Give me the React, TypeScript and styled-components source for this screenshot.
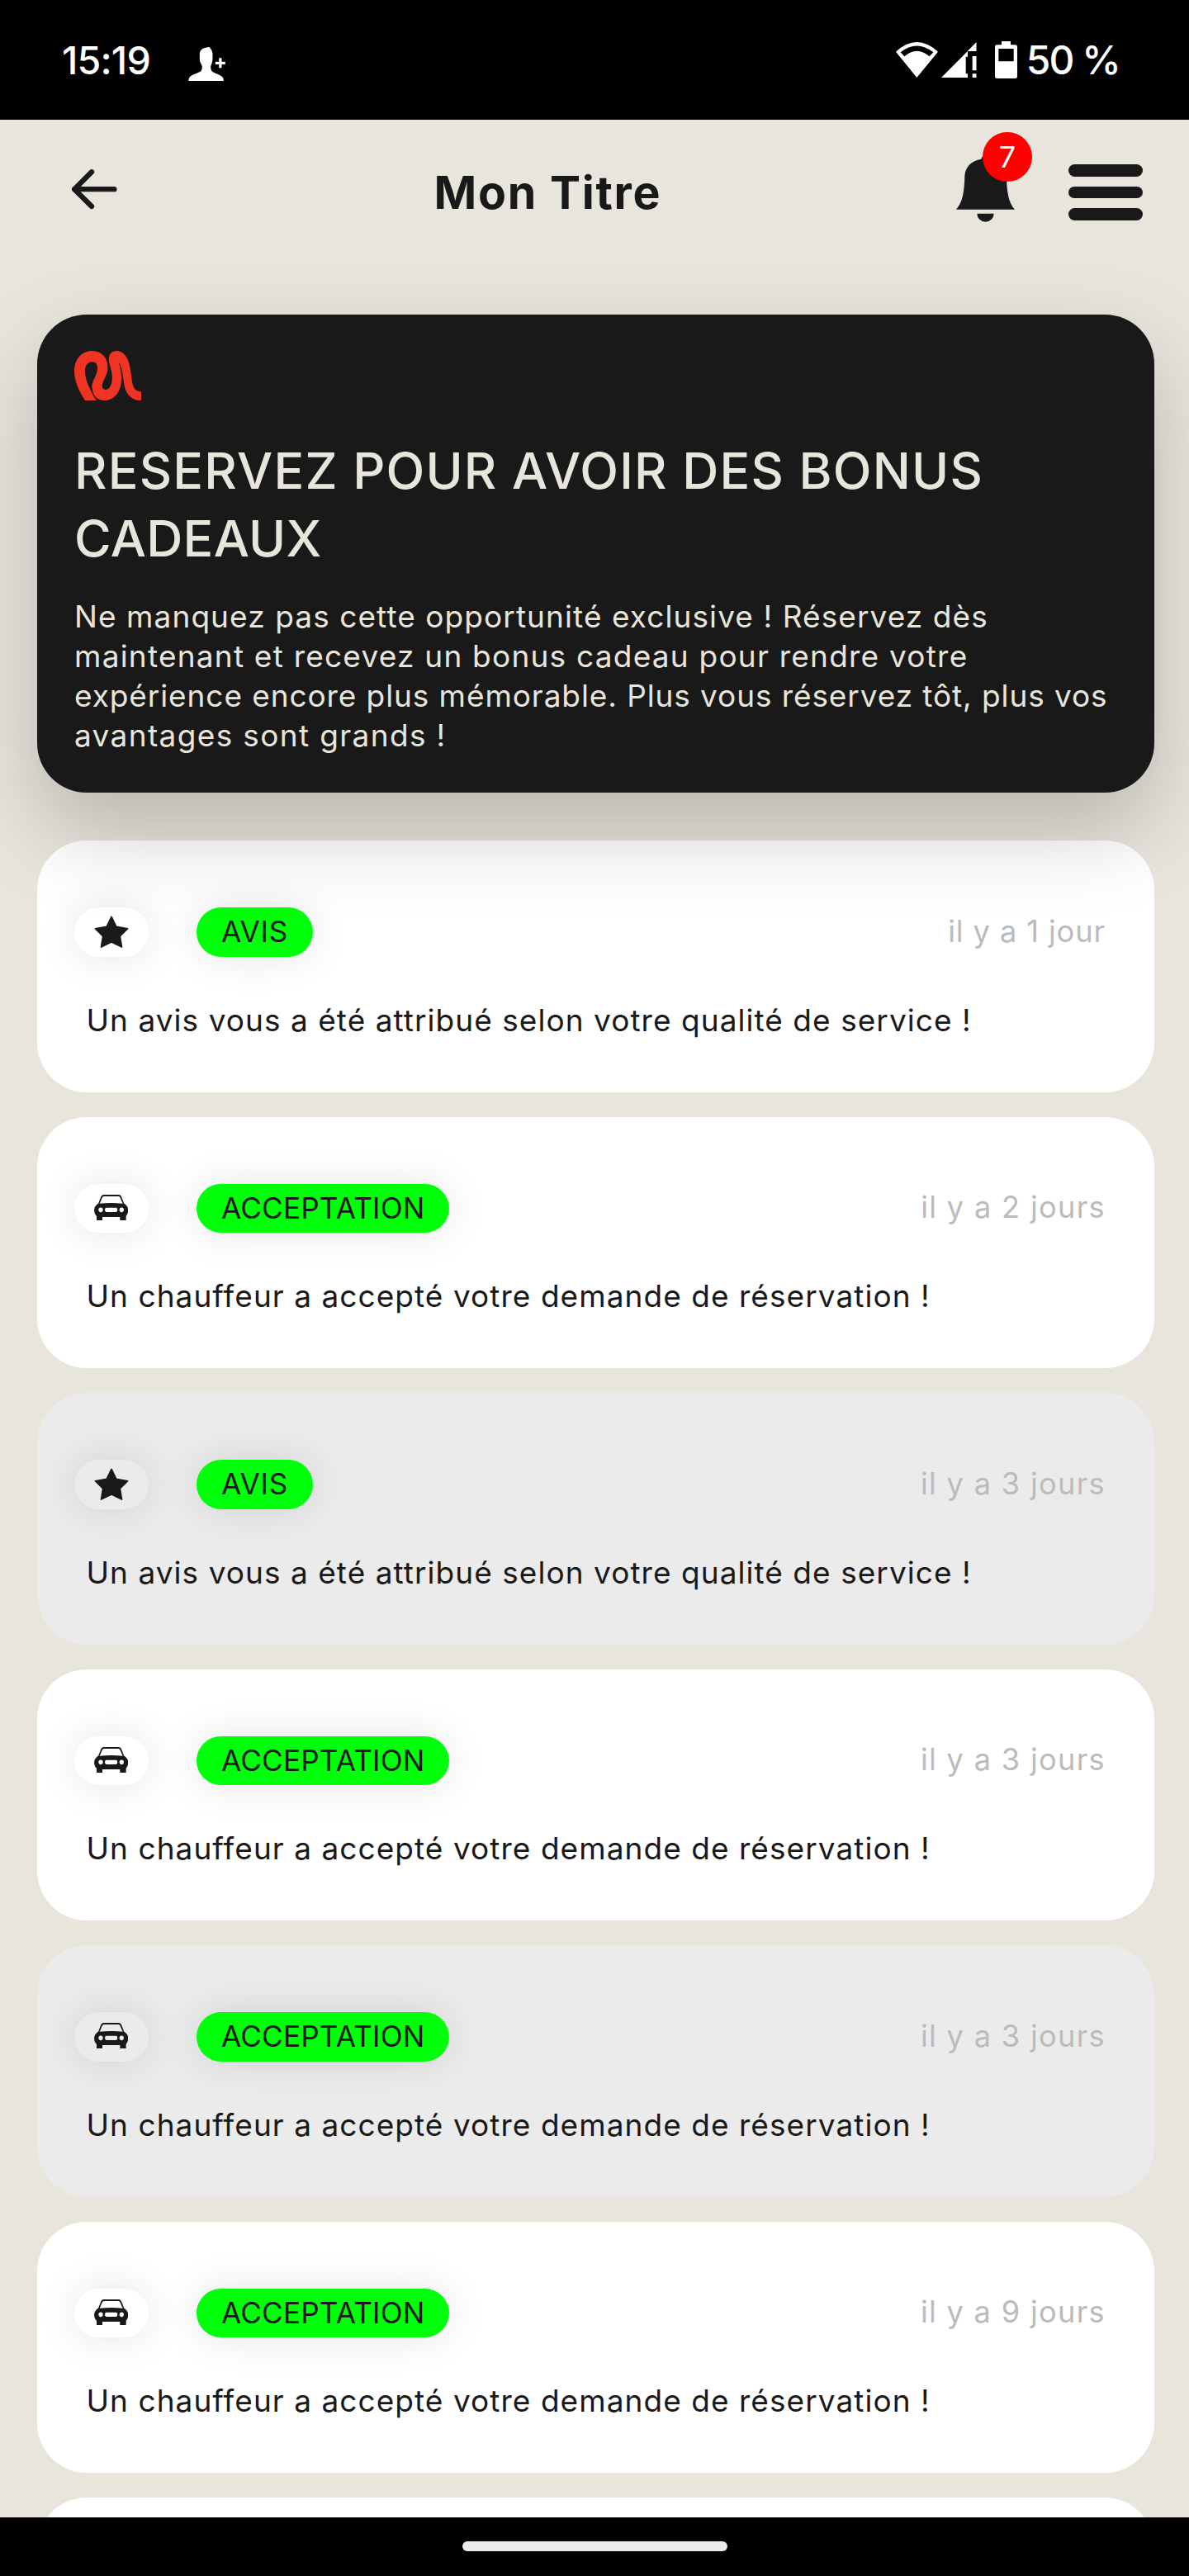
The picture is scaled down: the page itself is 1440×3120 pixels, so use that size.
import React from "react";
import styled, { createGlobalStyle } from "styled-components";

const ink = "#191919";
const cream = "#e8e5dd";

const GlobalStyle = createGlobalStyle`
  *, *::before, *::after { box-sizing: border-box; }
  body { margin: 0; background: ${cream}; }
`;

const Screen = styled.div`
  width: 1440px;
  height: 3120px;
  display: flex;
  flex-direction: column;
  overflow: hidden;
  background: ${cream};
  color: ${ink};
  font-family: Inter, "Liberation Sans", sans-serif;
`;

const StatusBar = styled.div`
  flex: none;
  height: 145px;
  padding: 0 84px 0 75px;
  display: flex;
  align-items: center;
  background: #000;
  color: #fff;
`;

const Clock = styled.span`
  font-size: 46.6px;
  font-weight: 500;
  letter-spacing: -0.8px;
  line-height: 56px;
  margin-right: 46px;
`;

const StatusIcons = styled.div`
  margin-left: auto;
  display: flex;
  align-items: center;
`;

const BatteryLevel = styled.span`
  font-size: 47.9px;
  font-weight: 500;
  letter-spacing: -1.9px;
  line-height: 56px;
  margin-left: 11px;
`;

const Glyph = styled.svg<{ $left?: number; $top?: number }>`
  display: block;
  flex: none;
  margin-left: ${(p) => p.$left ?? 0}px;
  margin-top: ${(p) => p.$top ?? 0}px;
`;

const Header = styled.header`
  flex: none;
  height: 176px;
  padding: 0 56px 0 86px;
  display: flex;
  align-items: center;
`;

const BackButton = styled.div`
  width: 439.5px;
  padding-bottom: 8px;
`;

const Title = styled.h1`
  margin: 0;
  font-size: 55.5px;
  line-height: 60px;
  font-weight: 650;
  letter-spacing: 1.75px;
`;

const Actions = styled.div`
  margin-left: auto;
  display: flex;
  align-items: center;
  gap: 65px;
`;

const Bell = styled.div`
  position: relative;
  margin-bottom: 10px;
`;

const Badge = styled.span`
  position: absolute;
  left: 32px;
  top: -27px;
  width: 60px;
  height: 60px;
  border-radius: 50%;
  background: #f00;
  color: #fff;
  display: flex;
  align-items: center;
  justify-content: center;
  font-size: 36px;
`;

const Burger = styled.div`
  width: 90px;
  height: 68px;
  display: flex;
  flex-direction: column;
  justify-content: space-between;
`;

const BurgerBar = styled.span`
  height: 14.7px;
  border-radius: 8px;
  background: ${ink};
`;

const Content = styled.main`
  flex: 1;
  min-height: 0;
  overflow: visible;
  padding: 60px 42px 0 45px;
`;

const Hero = styled.section`
  position: relative;
  z-index: 1;
  height: 579px;
  padding: 44px 45px 45px;
  border-radius: 60px;
  background: ${ink};
  color: ${cream};
  box-shadow: 0 45px 106px rgba(0, 0, 0, 0.21);
`;

const HeroTitle = styled.h2`
  margin: 43.5px 0 30px;
  font-size: 61px;
  line-height: 82px;
  font-weight: 500;
`;

const HeroText = styled.p`
  margin: 0;
  font-size: 37px;
  line-height: 48px;
`;

const Line = styled.span<{ $track: number }>`
  display: block;
  white-space: nowrap;
  letter-spacing: ${(p) => p.$track}px;
`;

const List = styled.div`
  margin-top: 58px;
  display: flex;
  flex-direction: column;
  gap: 30px;
`;

const Card = styled.article<{ $read?: boolean }>`
  flex: none;
  height: 304.5px;
  padding: 81px 60px 0 44.5px;
  border-radius: 60px;
  background: ${(p) => (p.$read ? "#ebebeb" : "#fff")};
`;

const CardTop = styled.div`
  height: 59.5px;
  display: flex;
  align-items: center;
`;

const IconPill = styled.div<{ $read?: boolean }>`
  width: 90px;
  height: 59.5px;
  border-radius: 30px;
  display: flex;
  align-items: center;
  justify-content: center;
  background: ${(p) => (p.$read ? "#ebebeb" : "#fff")};
  box-shadow: 0 0 50px rgba(0, 0, 0, 0.11);
`;

const Tag = styled.span<{ $track: number }>`
  height: 59.5px;
  margin-left: 58.5px;
  padding: 0 30px;
  border-radius: 30px;
  background: #00ff0a;
  font-size: 35.2px;
  line-height: 59px;
  letter-spacing: ${(p) => p.$track}px;
  box-shadow: 0 0 50px rgba(0, 0, 0, 0.11);
`;

const Time = styled.time<{ $track: number }>`
  margin: 0 -1px 2px auto;
  color: #bbb;
  font-size: 36.2px;
  line-height: 48px;
  letter-spacing: ${(p) => p.$track}px;
`;

const Message = styled.p`
  margin: 53px 0 0 15px;
  font-size: 37px;
  line-height: 48px;
  letter-spacing: 1.05px;
  white-space: nowrap;
`;

const NavBar = styled.div`
  position: relative;
  z-index: 2;
  flex: none;
  height: 71px;
  padding-top: 29px;
  background: #000;
`;

const NavHandle = styled.div`
  width: 321px;
  height: 12px;
  margin: 0 auto;
  border-radius: 6px;
  background: #ebebeb;
`;

const PersonAdd = () => (
  <Glyph $top={9} width="45" height="41" viewBox="686 168 134 123" fill="#fff">
    <path d="M762 168 C744 170 727 174 727 194 V214 C728 226 735 232 736 240 C736 248 734 255 728 258 C712 265 696 270 690 278 C687 283 686 287 687 291 H814 C814 286 813 281 809 276 C802 270 788 265 774 258 C768 254 767 247 767 240 C768 232 773 226 774 212 V192 C773 182 769 176 762 168Z" />
    <path d="M797 208h10v13h13v10h-13v13h-10v-13h-13v-10h13z" />
  </Glyph>
);

const Wifi = () => (
  <Glyph width="51" height="43" viewBox="135 153 153 129" fill="#fff">
    <path
      fillRule="evenodd"
      d="M211 282L135 188Q211 118 288 188ZM152 190Q211 143 271 190L257 205Q211 166 166 205Z"
    />
  </Glyph>
);

const Signal = () => (
  <Glyph $left={4.3} width="42.7" height="43" viewBox="301 153 128 129" fill="#fff">
    <path d="M301 282L390 193L397 186V206H390V268H397V282Z" />
    <path d="M428.500 153V186H396Z" />
    <path d="M414 204h14.500v52h-14.500zM414 268h14.500v14h-14.500z" />
  </Glyph>
);

const Battery = () => (
  <Glyph $left={22} width="27" height="45" viewBox="495 150 81 135" fill="#fff">
    <path
      fillRule="evenodd"
      d="M519 150H552V163H569Q576 163 576 170V278Q576 285 569 285H502Q495 285 495 278V170Q495 163 502 163H519ZM508 177V223H563V177Z"
    />
  </Glyph>
);

const ArrowLeft = () => (
  <Glyph width="56.7" height="50" viewBox="258 612 170 150" fill="none">
    <path
      d="M333 625L270.500 687.500L333 750M270.500 687.500H415"
      stroke={ink}
      strokeWidth="19"
      strokeLinecap="round"
      strokeLinejoin="round"
    />
  </Glyph>
);

const BellIcon = () => (
  <Glyph width="71" height="81.7" viewBox="355 561 213 245" fill={ink}>
    <path d="M355 761C380 735 385 690 386 640C388 606 410 584 446 578C448 560 476 560 478 578C514 584 536 606 538 650C540 700 546 738 568 761Z" />
    <path d="M431 776H492A30.500 30 0 0 1 431 776Z" />
  </Glyph>
);

const Logo = () => (
  <Glyph
    width="81"
    height="60"
    viewBox="132 195 182 180"
    preserveAspectRatio="none"
    fill="#f03423"
  >
    <path d="M161 375C142 335 132 300 132 270C132 225 152 195 180 195C208 195 223 222 223 255C223 285 208 302 208 322C208 332 212 336 218 336C229 336 235 315 235 292C235 265 226 245 226 224C226 206 234 195 247 195C264 195 277 215 282 245C288 280 287 300 292 322C296 337 303 343 314 343V375C290 376 273 355 268 320C264 285 262 255 252 233C257 255 261 275 260 300C259 345 240 375 214 375C192 375 180 352 180 326C180 300 195 285 195 258C195 243 190 235 180 235C168 235 161 250 161 268C161 300 175 340 193 375Z" />
    <path d="M180 330C181 350 186 365 195 375" fill="none" stroke={ink} strokeWidth="2" />
  </Glyph>
);

const Star = () => (
  <Glyph width="42" height="39.500" viewBox="-1 -1 126 118" fill={ink}>
    <path
      d="M62 3L79.500 39L121 46L93 73.500L99.500 113L62 95L24.500 113L31 73.500L3 46L44.500 39Z"
      stroke={ink}
      strokeWidth="5"
      strokeLinejoin="round"
    />
  </Glyph>
);

const Car = () => (
  <Glyph $top={-2} width="41.3" height="31.3" viewBox="0 0 124 94" fill={ink}>
    <path
      fillRule="evenodd"
      d="M15 32L25 7Q28 0 35 0H89Q96 0 99 7L109 32Q113 33 117 39Q124 45 124 55Q124 68 118 75L116 77V94H94V81H30V94H9V77L6 75Q0 68 0 55Q0 45 7 39Q11 33 15 32ZM20 32Q62 28 104 32L94 10Q92 6 87 6H37Q32 6 30 10ZM24 46.500A8 8.500 0 1 0 24 63.500A8 8.500 0 1 0 24 46.500ZM100 46.500A8 8.500 0 1 0 100 63.500A8 8.500 0 1 0 100 46.500ZM44 47Q39 48 39 55Q39 62 44 63H80Q85 62 85 55Q85 48 80 47Z"
    />
  </Glyph>
);

type Kind = "avis" | "acceptation";

const kinds = {
  avis: {
    tag: "AVIS",
    track: 0.7,
    icon: <Star />,
    message: "Un avis vous a été attribué selon votre qualité de service !",
  },
  acceptation: {
    tag: "ACCEPTATION",
    track: 0.15,
    icon: <Car />,
    message: "Un chauffeur a accepté votre demande de réservation !",
  },
};

const notifications: { kind: Kind; time: string; read?: boolean }[] = [
  { kind: "avis", time: "il y a 1 jour" },
  { kind: "acceptation", time: "il y a 2 jours" },
  { kind: "avis", time: "il y a 3 jours", read: true },
  { kind: "acceptation", time: "il y a 3 jours" },
  { kind: "acceptation", time: "il y a 3 jours", read: true },
  { kind: "acceptation", time: "il y a 9 jours" },
];

export default function App() {
  return (
    <>
      <GlobalStyle />
      <Screen>
        <StatusBar>
          <Clock>15:19</Clock>
          <PersonAdd />
          <StatusIcons>
            <Wifi />
            <Signal />
            <Battery />
            <BatteryLevel>50 %</BatteryLevel>
          </StatusIcons>
        </StatusBar>
        <Header>
          <BackButton>
            <ArrowLeft />
          </BackButton>
          <Title>Mon Titre</Title>
          <Actions>
            <Bell>
              <BellIcon />
              <Badge>7</Badge>
            </Bell>
            <Burger>
              <BurgerBar />
              <BurgerBar />
              <BurgerBar />
            </Burger>
          </Actions>
        </Header>
        <Content>
          <Hero>
            <Logo />
            <HeroTitle>
              <Line $track={1.2}>RESERVEZ POUR AVOIR DES BONUS</Line>
              <Line $track={0.3}>CADEAUX</Line>
            </HeroTitle>
            <HeroText>
              <Line $track={1.08}>Ne manquez pas cette opportunité exclusive ! Réservez dès</Line>
              <Line $track={1.23}>maintenant et recevez un bonus cadeau pour rendre votre</Line>
              <Line $track={0.91}>
                expérience encore plus mémorable. Plus vous réservez tôt, plus vos
              </Line>
              <Line $track={1.36}>avantages sont grands !</Line>
            </HeroText>
          </Hero>
          <List>
            {notifications.map((n, i) => {
              const kind = kinds[n.kind];
              return (
                <Card key={i} $read={n.read}>
                  <CardTop>
                    <IconPill $read={n.read}>{kind.icon}</IconPill>
                    <Tag $track={kind.track}>{kind.tag}</Tag>
                    <Time $track={n.time.endsWith("s") ? 1.3 : 0.9}>{n.time}</Time>
                  </CardTop>
                  <Message>{kind.message}</Message>
                </Card>
              );
            })}
            <Card />
          </List>
        </Content>
        <NavBar>
          <NavHandle />
        </NavBar>
      </Screen>
    </>
  );
}
